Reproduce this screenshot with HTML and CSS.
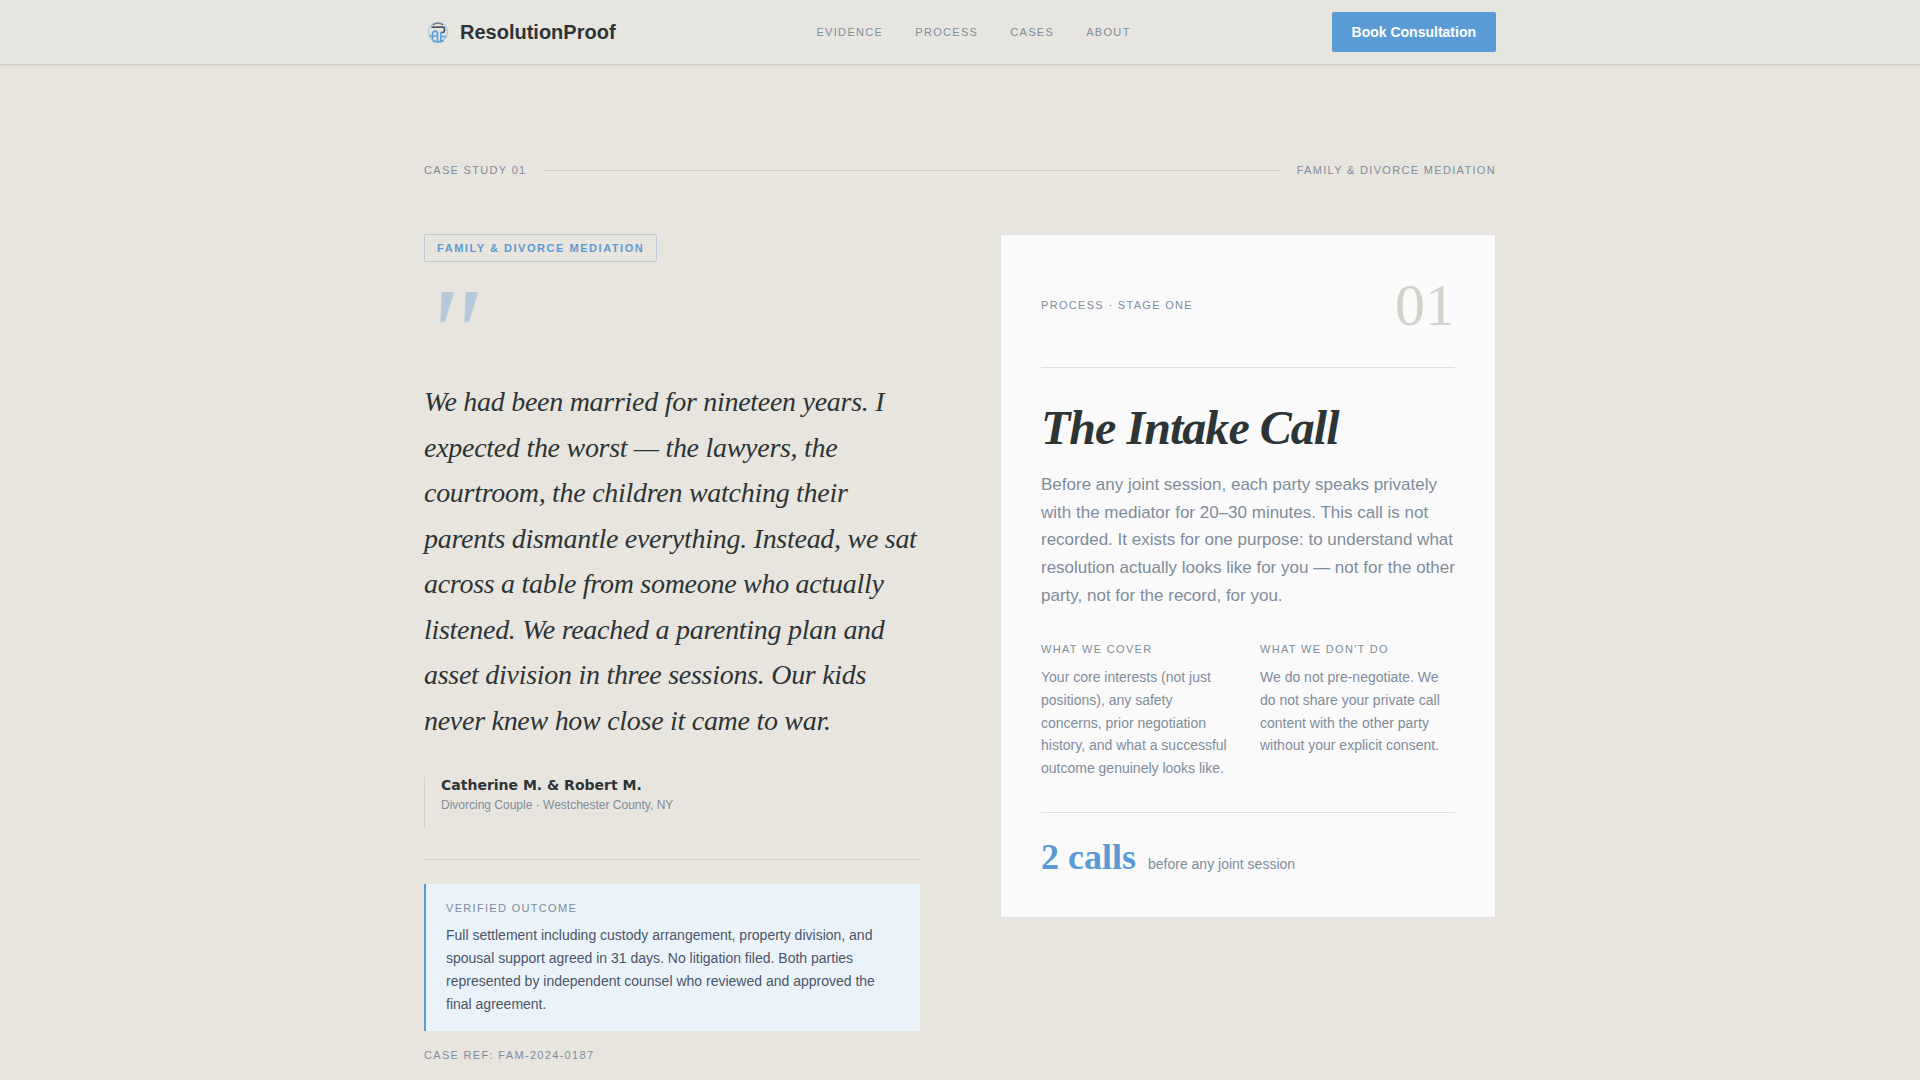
FILE: index.html
```html
<!DOCTYPE html>
<html lang="en">
<head>
    <meta charset="UTF-8">
    <meta name="viewport" content="width=device-width, initial-scale=1.0">
    <title>ResolutionProof - Case Studies</title>
    <link rel="stylesheet" href="styles.css">
</head>
<body>
    <!-- Navigation Bar -->
    <header class="navbar">
        <div class="container navbar-inner">
            <a href="#" class="logo">
                <svg class="logo-icon" viewBox="0 0 28 28" fill="none" aria-hidden="true">
                    <circle cx="14" cy="14" r="9.600" stroke="#a9c8e4" stroke-width="1.200"/>
                    <path d="M9 7c2.500-2.500 7.500-2.500 10 0" stroke="#6b7480" stroke-width="1.300"/>
                    <path d="M7.500 9.200h11.500c2 0 2 5.300 0 5.300h-2.500" stroke="#4a5568" stroke-width="1.700"/>
                    <path d="M5.500 18h7.500M8.500 21.500V16c0-3.800 5-3.800 5 0V24M16.800 14V24M16.800 18.500h5M8.500 22.500c3 2 8 2 11 0" stroke="#5ba3dc" stroke-width="1.700"/>
                </svg>
                <span>ResolutionProof</span>
            </a>
            <nav class="nav-links">
                <a href="#evidence">Evidence</a>
                <a href="#process">Process</a>
                <a href="#cases">Cases</a>
                <a href="#about">About</a>
            </nav>
            <button type="button" class="btn">Book Consultation</button>
        </div>
    </header>

    <main class="container case-study">
        <div class="case-header">
            <span class="label">Case Study 01</span>
            <span class="case-line"></span>
            <span class="label">Family &amp; Divorce Mediation</span>
        </div>

        <div class="case-grid">
            <!-- Testimonial -->
            <section class="testimonial">
                <span class="label tag">Family &amp; Divorce Mediation</span>
                <div class="quote-mark" aria-hidden="true">"</div>
                <blockquote class="quote">We had been married for nineteen years. I expected the worst — the lawyers, the courtroom, the children watching their parents dismantle everything. Instead, we sat across a table from someone who actually listened. We reached a parenting plan and asset division in three sessions. Our kids never knew how close it came to war.</blockquote>
                <div class="author">
                    <p class="author-name">Catherine M. &amp; Robert M.</p>
                    <p class="author-info">Divorcing Couple · Westchester County, NY</p>
                </div>
                <div class="outcome-wrap">
                    <div class="outcome">
                        <h3 class="label">Verified Outcome</h3>
                        <p>Full settlement including custody arrangement, property division, and spousal support agreed in 31 days. No litigation filed. Both parties represented by independent counsel who reviewed and approved the final agreement.</p>
                    </div>
                    <p class="label case-ref">Case Ref: FAM-2024-0187</p>
                </div>
            </section>

            <!-- Process Stage -->
            <section class="stage">
                <div class="stage-header">
                    <span class="label">Process · Stage One</span>
                    <span class="stage-number">01</span>
                </div>
                <h2>The Intake Call</h2>
                <p class="stage-text">Before any joint session, each party speaks privately with the mediator for 20–30 minutes. This call is not recorded. It exists for one purpose: to understand what resolution actually looks like for you — not for the other party, not for the record, for you.</p>
                <div class="stage-columns">
                    <div>
                        <h3 class="label">What We Cover</h3>
                        <p>Your core interests (not just positions), any safety concerns, prior negotiation history, and what a successful outcome genuinely looks like.</p>
                    </div>
                    <div>
                        <h3 class="label">What We Don't Do</h3>
                        <p>We do not pre-negotiate. We do not share your private call content with the other party without your explicit consent.</p>
                    </div>
                </div>
                <div class="stage-footer">
                    <span class="stat">2 calls</span>
                    <span>before any joint session</span>
                </div>
            </section>
        </div>
    </main>
</body>
</html>
```

FILE: styles.css
```css
* {
    box-sizing: border-box;
    margin: 0;
    padding: 0;
}

body {
    font-family: "Liberation Sans", Arial, sans-serif;
    background-color: #e8e5de;
    color: #2d3436;
    font-size: 14px;
    line-height: 1.625;
}

.container {
    max-width: 1200px;
    margin: 0 auto;
    padding: 0 64px;
}

/* Navigation */
.navbar {
    background-color: #e7e5df;
    border-bottom: 1px solid #d1cec8;
    box-shadow: 0 1px 3px rgba(0, 0, 0, 0.06);
}

.navbar-inner {
    display: flex;
    justify-content: space-between;
    align-items: center;
    min-height: 64px;
}

.logo {
    display: flex;
    align-items: center;
    gap: 8px;
    color: #2d3436;
    font-size: 20px;
    font-weight: bold;
    line-height: 28px;
    text-decoration: none;
}

.logo-icon {
    width: 28px;
    height: 28px;
}

.nav-links {
    display: flex;
    gap: 32px;
}

.nav-links a {
    color: #7f8c9b;
    font-size: 11px;
    line-height: 16px;
    letter-spacing: 0.12em;
    text-transform: uppercase;
    text-decoration: none;
}

.nav-links a:hover {
    color: #5b9bd5;
}

.btn {
    height: 40px;
    padding: 0 20px;
    background-color: #5b9bd5;
    border: none;
    border-radius: 2px;
    color: #fff;
    font-family: inherit;
    font-size: 14px;
    font-weight: bold;
    cursor: pointer;
}

.label {
    color: #7f8c9b;
    font-size: 11px;
    font-weight: normal;
    line-height: 18px;
    letter-spacing: 0.12em;
    text-transform: uppercase;
}

/* Case study */
.case-study {
    padding-top: 96px;
    padding-bottom: 96px;
}

.case-header {
    display: flex;
    align-items: center;
    gap: 16px;
    margin-bottom: 55px;
}

.case-line {
    flex: 1;
    height: 1px;
    background-color: #cfccc6;
}

.case-grid {
    display: grid;
    grid-template-columns: 1fr 1fr;
    gap: 80px;
    align-items: start;
}

.tag {
    display: inline-block;
    padding: 4px 12px;
    border: 1px solid #bccbd6;
    border-radius: 2px;
    color: #5b9bd5;
    font-weight: bold;
    letter-spacing: 0.14em;
}

.quote-mark {
    margin: 28px 0 5px;
    color: #b4cadb;
    font-family: "Liberation Serif", "Times New Roman", serif;
    font-size: 128px;
    font-style: italic;
    line-height: 84px;
}

.quote {
    font-family: "Liberation Serif", "Times New Roman", serif;
    font-size: 28px;
    font-style: italic;
    letter-spacing: -0.01em;
}

.author {
    margin-top: 34px;
    padding: 0 0 10px 16px;
    border-left: 1px solid #d1cec8;
}

.author-name {
    font-family: "DejaVu Sans", sans-serif;
    font-weight: bold;
    line-height: 16px;
}

.author-info {
    color: #7f8c9b;
    font-size: 12px;
    line-height: 24px;
}

.outcome-wrap {
    margin-top: 32px;
    padding-top: 24px;
    border-top: 1px solid #d1cec8;
}

.outcome {
    padding: 15px 20px;
    background-color: #ebf3fa;
    border-left: 2px solid #5b9bd5;
    color: #4a5568;
    line-height: 1.65;
}

.outcome h3 {
    margin-bottom: 7px;
}

.case-ref {
    margin-top: 15px;
}

/* Process stage card */
.stage {
    padding: 40px;
    background-color: #fafafa;
    border: 1px solid #e2e3e6;
    color: #7f8c9b;
}

.stage-header {
    display: flex;
    justify-content: space-between;
    align-items: center;
    padding-bottom: 32px;
    margin-bottom: 32px;
    border-bottom: 1px solid #dcdcdc;
}

.stage-number {
    color: #d4d1ca;
    font-family: "Liberation Serif", "Times New Roman", serif;
    font-size: 60px;
    line-height: 60px;
}

.stage h2 {
    margin-bottom: 15px;
    color: #2d3436;
    font-family: "Liberation Serif", "Times New Roman", serif;
    font-size: 48px;
    font-style: italic;
    line-height: 56px;
    letter-spacing: -0.02em;
}

.stage-text {
    font-size: 17px;
}

.stage-columns {
    display: grid;
    grid-template-columns: 1fr 1fr;
    gap: 24px;
    margin: 31px 0 32px;
}

.stage-columns h3 {
    margin-bottom: 8px;
}

.stage-footer {
    display: flex;
    align-items: baseline;
    gap: 12px;
    padding-top: 24px;
    border-top: 1px solid #dcdcdc;
}

.stat {
    color: #5b9bd5;
    font-family: "Liberation Serif", "Times New Roman", serif;
    font-size: 36px;
    font-weight: bold;
    line-height: 40px;
}
```
